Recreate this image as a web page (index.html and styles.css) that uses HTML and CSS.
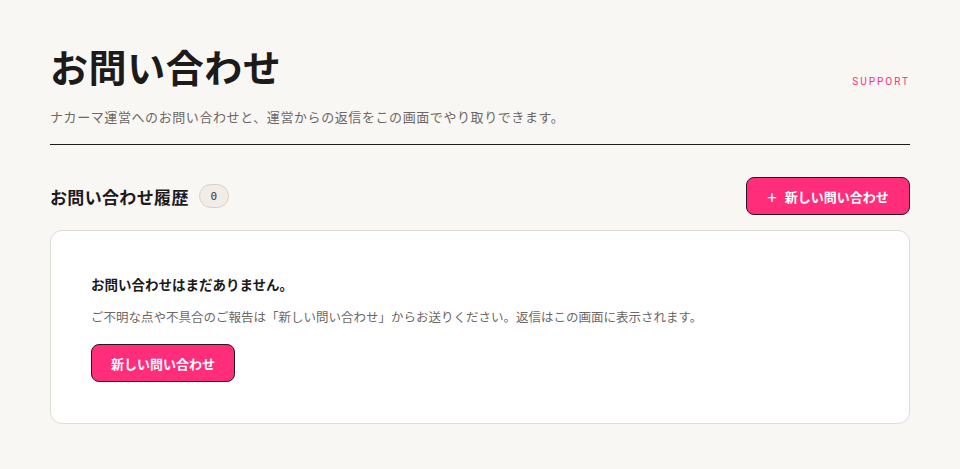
FILE: index.html
```html
<!DOCTYPE html>
<html lang="ja">
<head>
<meta charset="utf-8">
<title>お問い合わせ</title>
<link rel="stylesheet" href="styles.css">
</head>
<body>
<main class="page">
  <header class="page-header">
    <div class="page-heading">
      <h1 class="page-title">お問い合わせ</h1>
      <p class="page-lead">ナカーマ運営へのお問い合わせと、運営からの返信をこの画面でやり取りできます。</p>
    </div>
    <span class="eyebrow">SUPPORT</span>
  </header>

  <section class="history">
    <div class="history-head">
      <h2 class="history-title">お問い合わせ履歴 <span class="count">0</span></h2>
      <button class="btn btn-new" type="button"><span class="plus">+</span>新しい問い合わせ</button>
    </div>
    <div class="empty-card">
      <p class="empty-title">お問い合わせはまだありません。</p>
      <p class="empty-text">ご不明な点や不具合のご報告は「新しい問い合わせ」からお送りください。返信はこの画面に表示されます。</p>
      <button class="btn btn-empty" type="button">新しい問い合わせ</button>
    </div>
  </section>
</main>
</body>
</html>
```
FILE: styles.css
```css
* { box-sizing: border-box; }
html, body { margin: 0; padding: 0; }
body {
  background: #f9f7f3;
  color: #1c1a1b;
  font-family: "Noto Sans CJK JP", "Noto Sans", sans-serif;
}
.page {
  width: 860px;
  margin: 0 auto;
  padding-top: 43px;
}
.page-header {
  display: flex;
  justify-content: space-between;
  align-items: flex-start;
  border-bottom: 1px solid #1c1a1b;
  padding-bottom: 17px;
}
.page-title {
  margin: 0;
  font-size: 38px;
  line-height: 46px;
  font-weight: 700;
  letter-spacing: 0.015em;
}
.page-lead {
  margin: 18px 0 0;
  font-size: 13px;
  line-height: 20px;
  letter-spacing: 0.045em;
  color: #6d6866;
}
.eyebrow {
  margin-top: 33px;
  font-family: Roboto, "Liberation Sans", sans-serif;
  font-size: 10px;
  letter-spacing: 0.2em;
  color: #ff2d7a;
}
.history { margin-top: 32px; }
.history-head {
  display: flex;
  justify-content: space-between;
  align-items: center;
  margin-bottom: 15px;
}
.history-title {
  margin: 0;
  font-size: 17px;
  font-weight: 700;
  letter-spacing: 0.02em;
  display: flex;
  align-items: center;
  gap: 10px;
}
.count {
  display: inline-flex;
  align-items: center;
  justify-content: center;
  width: 30px;
  height: 24px;
  border-radius: 12px;
  background: #f1ece6;
  border: 1px solid #d9d1c8;
  font-family: "DejaVu Sans Mono", monospace;
  font-size: 11px;
  font-weight: 400;
  letter-spacing: 0;
  color: #3a3436;
}
.btn {
  height: 38px;
  border: 1px solid #2a1520;
  border-radius: 8px;
  background: #ff2d7a;
  color: #fff;
  font-family: "Noto Sans CJK JP", sans-serif;
  font-size: 13px;
  font-weight: 700;
  cursor: pointer;
  display: inline-flex;
  align-items: center;
  justify-content: center;
}
.btn-new { width: 164px; }
.plus {
  font-size: 17px;
  font-weight: 400;
  margin-right: 8px;
  line-height: 1;
}
.empty-card {
  background: #fff;
  border: 1px solid #dedad6;
  border-radius: 12px;
  padding: 43px 40px 41px;
}
.empty-title {
  margin: 0;
  font-size: 13.5px;
  font-weight: 700;
  line-height: 20px;
}
.empty-text {
  margin: 13px 0 17px;
  font-size: 12.5px;
  line-height: 20px;
  color: #6d6866;
}
.btn-empty { width: 144px; }
```
